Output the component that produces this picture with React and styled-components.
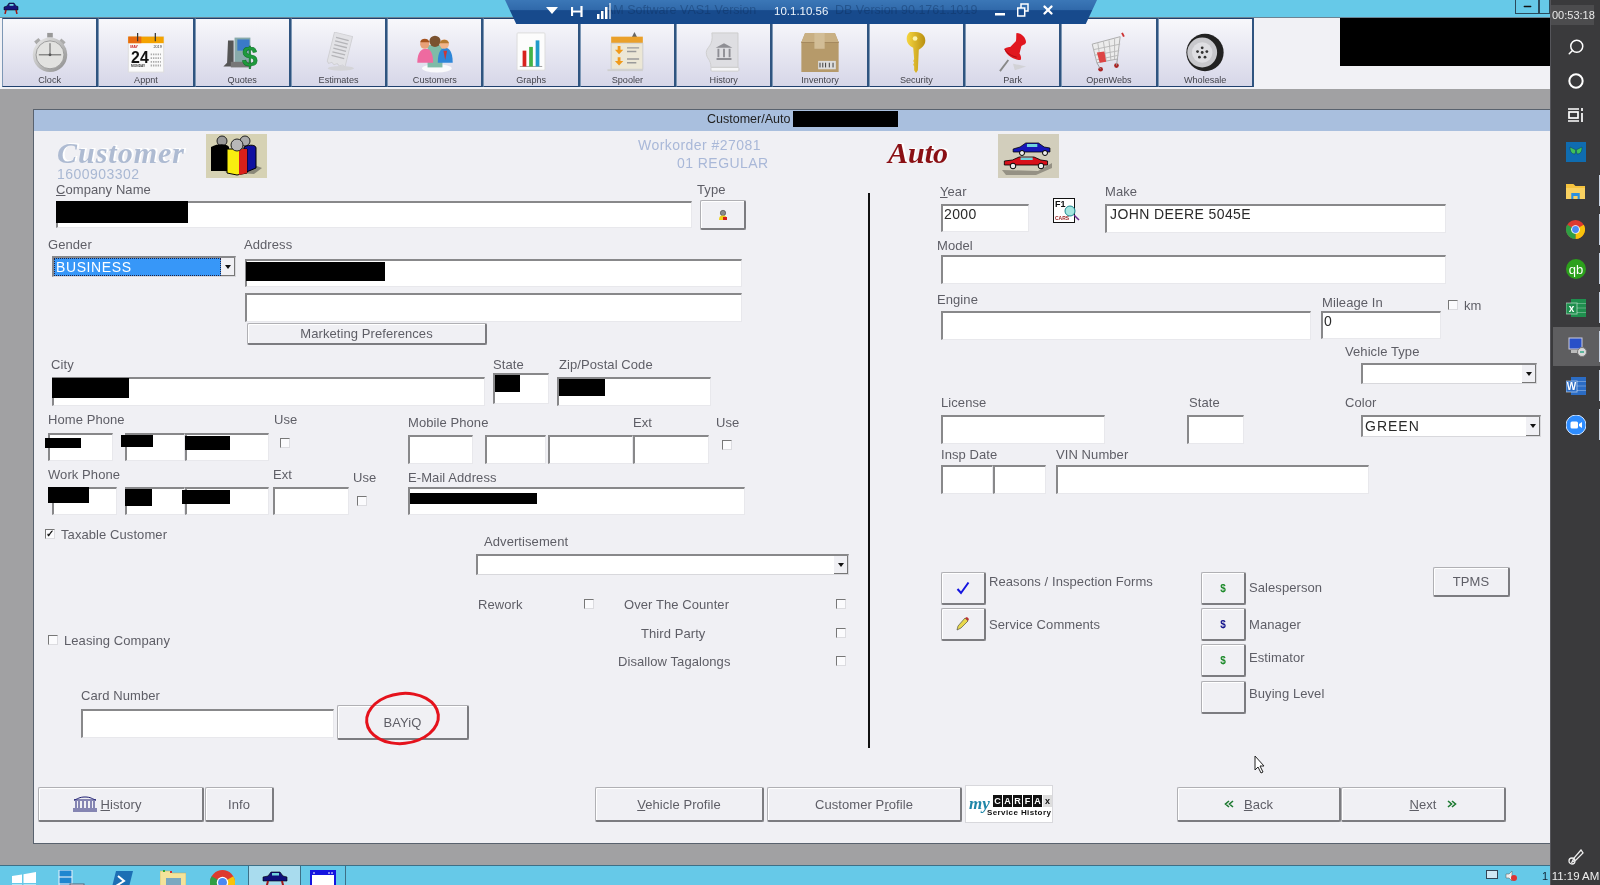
import React from 'react'
import styled, { createGlobalStyle } from 'styled-components'
import { Search, Circle, Minus, X } from 'lucide-react'

const Global = createGlobalStyle`
  html, body { margin: 0; padding: 0; height: 100%; overflow: hidden; }
  body { font-family: "Liberation Sans", Arial, sans-serif; background: #66c9e8; }
  #root { height: 100%; }
`

const Screen = styled.div`
  position: relative;
  display: flex;
  width: 1600px;
  height: 885px;
  overflow: hidden;
  filter: blur(.3px);
`
const Desktop = styled.div`
  display: flex;
  flex-direction: column;
  width: 1550px;
  height: 100%;
`
const TopBar = styled.div`
  height: 17px;
  background: #66c9e8;
  display: flex;
  align-items: flex-start;
  justify-content: space-between;
  padding-left: 3px;
  svg { margin-top: 2px; }
`
const TopButtons = styled.div`
  display: flex;
`
const TopButton = styled.div`
  box-sizing: border-box;
  width: ${p => p.$w}px;
  height: 14px;
  border: 1px solid #2b4a5c;
  border-top: 0;
  display: flex;
  align-items: center;
  justify-content: center;
  svg { margin-top: 0; }
`
const Toolbar = styled.div`
  height: 72px;
  background: #f1f1f5;
  border-top: 1px solid #6c8494;
  box-sizing: border-box;
  padding-left: 2px;
  display: grid;
  grid-template-columns: repeat(13, 96.3px);
  grid-template-rows: 69px;
`
const ToolButton = styled.div`
  box-sizing: border-box;
  display: flex;
  flex-direction: column;
  align-items: center;
  border: 1px solid #20406e;
  border-left: 1px solid #7d97b5;
  border-right: 2px solid #2f5480;
  background: linear-gradient(#f8f8fb, #d6d6e8);
  padding-top: 13px;
  svg { display: block; }
`
const ToolLabel = styled.span`
  font-size: 9.1px;
  line-height: 11px;
  margin-top: 2px;
  color: #44444c;
`
const Redact = styled.div`
  position: absolute;
  left: ${p => p.$x}px;
  top: ${p => p.$y}px;
  width: ${p => p.$w}px;
  height: ${p => p.$h}px;
  background: #000;
`
const Workspace = styled.div`
  flex: 1;
  min-height: 0;
  background: #a1a1a3;
  padding: 20px 0 21px 33px;
  display: flex;
`
const Window = styled.div`
  flex: 1;
  display: flex;
  flex-direction: column;
  background: #f0f0f4;
  border: 1px solid #59626e;
  border-right: 0;
`
const TitleBar = styled.div`
  position: relative;
  height: 21px;
  flex-shrink: 0;
  background: #a9bfde;
  font-size: 12.5px;
  line-height: 18px;
  color: #222;
  padding-left: 673px;
`
const Head = styled.div`
  height: 50px;
  flex-shrink: 0;
  display: flex;
  align-items: flex-start;
  padding-left: 23px;
`
const LogoStack = styled.div`
  width: 149px;
  flex-shrink: 0;
`
const CustomerLogo = styled.div`
  font: italic bold 30px/28px "Liberation Serif", serif;
  letter-spacing: 1px;
  margin-top: 8px;
  color: #aebbd2;
  text-shadow: 2px -1px 0 #fff;
`
const AccountNo = styled.div`
  font-size: 14px;
  line-height: 14px;
  letter-spacing: .45px;
  color: #a9b8d3;
`
const Tile = styled.div`
  flex-shrink: 0;
  width: 61px;
  height: 44px;
  margin-left: ${p => p.$ml || 0}px;
  margin-top: 3px;
  background: ${p => p.$bg};
  svg { display: block; }
`
const OrderInfo = styled.div`
  margin-left: 371px;
  width: 131px;
  flex-shrink: 0;
  font-size: 14px;
  line-height: 18px;
  letter-spacing: .45px;
  color: #a9b8d8;
  padding-top: 5px;
  white-space: nowrap;
`
const OrderLine = styled.div`
  margin-left: ${p => p.$ml || 0}px;
`
const AutoLogo = styled.div`
  width: 60px;
  margin-left: 119px;
  margin-right: 50px;
  flex-shrink: 0;
  margin-top: 8px;
  font: italic bold 30px/28px "Liberation Serif", serif;
  color: #8a1014;
  text-shadow: 2px -1px 0 #fff;
`
const Main = styled.div`
  height: 606px;
  flex-shrink: 0;
  display: flex;
  align-items: flex-start;
`
const LeftPane = styled.div`
  width: 834px;
  flex-shrink: 0;
`
const Divider = styled.div`
  width: 2px;
  height: 555px;
  margin-top: 12px;
  background: #111;
  flex-shrink: 0;
`
const RightPane = styled.div`
  flex: 1;
  padding-left: 70px;
`
const Row = styled.div`
  display: flex;
  align-items: flex-start;
  margin-top: ${p => p.$mt || 0}px;
`
const Field = styled.div`
  display: flex;
  flex-direction: column;
  flex-shrink: 0;
  margin-left: ${p => p.$ml || 0}px;
  margin-top: ${p => p.$mt || 0}px;
  width: ${p => (p.$w ? `${p.$w}px` : 'auto')};
`
const Label = styled.div`
  height: 14px;
  line-height: 16px;
  font-size: 13px;
  letter-spacing: .08px;
  color: #5e5e66;
  white-space: nowrap;
  margin-left: ${p => p.$ml || 0}px;
  margin-top: ${p => p.$mt || 0}px;
  margin-bottom: ${p => p.$gap || 0}px;
  width: ${p => (p.$w ? `${p.$w}px` : 'auto')};
  flex-shrink: 0;
`
const TextBox = styled.div`
  position: relative;
  flex-shrink: 0;
  box-sizing: border-box;
  width: ${p => p.$w}px;
  height: ${p => p.$h}px;
  margin-left: ${p => p.$ml || 0}px;
  margin-top: ${p => p.$mt || 0}px;
  background: #fff;
  border-top: 2px solid #88888a;
  border-left: 2px solid #88888a;
  border-right: 1px solid #e8e8ec;
  border-bottom: 1px solid #e8e8ec;
  padding: 0 0 0 ${p => (p.$spaced ? 3 : 1)}px;
  font-size: 14px;
  line-height: 16px;
  letter-spacing: .4px;
  color: #2a2a2a;
`
const SelectBox = styled.div`
  flex-shrink: 0;
  box-sizing: border-box;
  display: flex;
  width: ${p => p.$w}px;
  height: ${p => p.$h}px;
  margin-left: ${p => p.$ml || 0}px;
  background: #fff;
  border-top: 2px solid #88888a;
  border-left: 2px solid #88888a;
  border-right: 1px solid #d8d8dc;
  border-bottom: 1px solid #d8d8dc;
`
const SelectValue = styled.div`
  flex: 1;
  padding: 1px 0 0 2px;
  font-size: 14px;
  line-height: 16px;
  letter-spacing: ${p => (p.$focus ? '.6px' : '1px')};
  color: ${p => (p.$focus ? '#fff' : '#2a2a2a')};
  background: ${p => (p.$focus ? '#3797f8' : '#fff')};
  outline: ${p => (p.$focus ? '1px dotted #224' : '0')};
  outline-offset: -1px;
`
const SelectArrow = styled.div`
  box-sizing: border-box;
  width: 14px;
  background: #f0f0f4;
  border-right: 1px solid #777;
  border-bottom: 1px solid #777;
  display: flex;
  align-items: center;
  justify-content: center;
  &::after {
    content: '';
    border-left: 3px solid transparent;
    border-right: 3px solid transparent;
    border-top: 4px solid #111;
  }
`
const CheckBox = styled.div`
  box-sizing: border-box;
  flex-shrink: 0;
  width: 10px;
  height: 10px;
  margin-left: ${p => p.$ml || 0}px;
  margin-top: ${p => p.$mt || 0}px;
  background: #fbfbfd;
  border-top: 1px solid #777;
  border-left: 1px solid #777;
  border-right: 1px solid #dcdce0;
  border-bottom: 1px solid #dcdce0;
  display: flex;
  align-items: center;
  justify-content: center;
  font-size: 10px;
  font-weight: bold;
  line-height: 8px;
  color: #111;
`
const CheckLine = styled.div`
  display: flex;
  align-items: center;
  gap: 6px;
  height: 14px;
  flex-shrink: 0;
  margin-left: ${p => p.$ml || 0}px;
  margin-top: ${p => p.$mt || 0}px;
  width: ${p => (p.$w ? `${p.$w}px` : 'auto')};
`
const Flags = styled.div`
  display: flex;
  flex-direction: column;
  gap: 14.5px;
  margin-left: 230px;
  flex-shrink: 0;
`
const FlagRow = styled.div`
  display: flex;
  align-items: center;
  height: 14px;
`
const Btn = styled.div`
  position: relative;
  flex-shrink: 0;
  box-sizing: border-box;
  display: flex;
  align-items: center;
  justify-content: center;
  gap: ${p => p.$gap || 0}px;
  width: ${p => p.$w}px;
  height: ${p => p.$h}px;
  margin-left: ${p => p.$ml || 0}px;
  margin-top: ${p => p.$mt || 0}px;
  padding: 0 ${p => p.$pr || 0}px 0 ${p => p.$pl || 0}px;
  background: #f0f0f4;
  border: 1px solid #b0b0b4;
  border-right: 2px solid #7c7c80;
  border-bottom: 2px solid #7c7c80;
  border-radius: 2px;
  box-shadow: inset 1px 1px 0 #fff;
  font-size: 13px;
  letter-spacing: .08px;
  color: #5e5e66;
  white-space: nowrap;
`
const RedRing = styled.div`
  position: absolute;
  left: 27px;
  top: -14px;
  width: 75px;
  height: 53px;
  box-sizing: border-box;
  border: 3px solid #e5121c;
  border-radius: 50%;
  transform: rotate(-6deg);
`
const ActionCol = styled.div`
  display: flex;
  flex-direction: column;
  gap: 3px;
  margin-top: 5px;
  margin-left: ${p => p.$ml || 0}px;
  width: ${p => p.$w}px;
  flex-shrink: 0;
`
const ActionRow = styled.div`
  display: flex;
  align-items: flex-start;
  margin-top: ${p => p.$mt || 0}px;
`
const ActionLabel = styled(Label)`
  margin-left: 3px;
  margin-top: ${p => p.$dy}px;
`
const Footer = styled.div`
  display: flex;
  align-items: flex-start;
  height: 35px;
`
const CarfaxBox = styled.div`
  box-sizing: border-box;
  width: 88px;
  height: 38px;
  margin-left: 3px;
  margin-top: -2px;
  flex-shrink: 0;
  background: #fff;
  border: 1px solid #d8d8dc;
  display: flex;
  align-items: flex-start;
  padding: 9px 0 0 3px;
`
const CarfaxMy = styled.span`
  width: 21px;
  flex-shrink: 0;
  font: italic bold 17px/18px "Liberation Serif", serif;
  color: #1f86a8;
`
const CarfaxStack = styled.div`
  margin-left: 3px;
`
const CarfaxLetters = styled.div`
  display: flex;
  gap: 1px;
`
const CarfaxLetter = styled.span`
  width: 9px;
  height: 12px;
  background: ${p => (p.$light ? '#ddd' : '#111')};
  color: ${p => (p.$light ? '#111' : '#fff')};
  font-size: 9px;
  line-height: 12px;
  font-weight: bold;
  text-align: center;
`
const CarfaxService = styled.div`
  font-size: 8px;
  line-height: 11px;
  font-weight: bold;
  color: #111;
  white-space: nowrap;
  letter-spacing: .4px;
  margin-left: -6px;
`
const Taskbar = styled.div`
  height: 20px;
  box-sizing: border-box;
  background: #66c9e8;
  border-top: 1px solid #3e6f86;
  display: flex;
  overflow: hidden;
  flex-shrink: 0;
`
const TaskSlot = styled.div`
  box-sizing: border-box;
  width: ${p => p.$w}px;
  flex-shrink: 0;
  display: flex;
  justify-content: center;
  padding-top: ${p => p.$pt || 4}px;
  background: ${p => (p.$active ? '#a9dcee' : 'transparent')};
  border-right: ${p => (p.$line ? '1px solid #3e6f86' : '0')};
  svg { flex-shrink: 0; }
`
const Tray = styled.div`
  margin-left: auto;
  display: flex;
  align-items: flex-start;
  gap: 7px;
  padding: 4px 2px 0 0;
  font-size: 11px;
  color: #123;
`
const TrayCount = styled.span`
  margin-left: 18px;
`
const Sidebar = styled.div`
  width: 50px;
  height: 100%;
  background: #3a3a3c;
  border-left: 1px solid #55555a;
  box-sizing: border-box;
  display: flex;
  flex-direction: column;
  align-items: stretch;
  color: #fff;
`
const Timer = styled.div`
  height: 20px;
  margin: 5px 6px 5px 0;
  background: #4c4c4e;
  font-size: 11px;
  line-height: 20px;
  color: #e8e8e8;
  white-space: nowrap;
  padding-left: 1px;
`
const SideSlot = styled.div`
  position: relative;
  height: ${p => p.$h}px;
  flex-shrink: 0;
  display: flex;
  align-items: center;
  justify-content: center;
  background: ${p => (p.$active ? '#5e5e60' : 'transparent')};
  margin-left: ${p => (p.$active ? 2 : 0)}px;
  ${p => p.$running && `
    &::after {
      content: '';
      position: absolute;
      right: 0;
      top: 4px;
      bottom: 4px;
      width: 1px;
      background: #c9d4e4;
    }
  `}
`
const SideSearch = styled(Search)`
  transform: scaleX(-1);
`
const SideBottom = styled.div`
  margin-top: auto;
  display: flex;
  flex-direction: column;
  align-items: center;
  gap: 4px;
  padding-bottom: 1px;
  font-size: 11.5px;
  line-height: 15px;
  white-space: nowrap;
  color: #eee;
`
const ConnBar = styled.div`
  position: absolute;
  left: 505px;
  top: 0;
  width: 592px;
  height: 24px;
  clip-path: polygon(0 0, 100% 0, 98.1% 100%, 1.9% 100%);
  background: linear-gradient(#3b77b7 0, #3069aa 42%, #174a8c 44%, #174a8c 100%);
  color: #fff;
`
const ConnGhost = styled.div`
  position: absolute;
  left: ${p => p.$x}px;
  top: 2px;
  font-size: 12.5px;
  line-height: 16px;
  white-space: nowrap;
  color: rgba(12, 44, 90, .4);
`
const ConnIp = styled.div`
  position: absolute;
  left: 269px;
  top: 3px;
  font-size: 11.5px;
  line-height: 16px;
  color: #eef4fb;
`
const ConnIcons = styled.div`
  position: absolute;
  left: ${p => p.$x}px;
  top: 3px;
  display: flex;
  align-items: center;
  gap: ${p => p.$gap}px;
`
const Cursor = styled.svg`
  position: absolute;
  left: 1254px;
  top: 755px;
`
const F1Wrap = styled.div`
  flex-shrink: 0;
  width: 27px;
  height: 26px;
  margin: 14px 0 0 24px;
`
const ChevronSvg = styled.svg`
  transform: ${p => (p.$flip ? 'scaleX(-1)' : 'none')};
`

/* toolbar drawings */
const ClockIcon = () => (
  <svg width="44" height="44" viewBox="0 0 44 44">
    <defs><linearGradient id="cg" x1="0" y1="0" x2="1" y2="1"><stop offset="0" stopColor="#eee" /><stop offset="1" stopColor="#8a8a8a" /></linearGradient></defs>
    <rect x="19" y="1" width="6" height="5" fill="#999" />
    <rect x="6" y="7" width="6" height="4" fill="#aaa" transform="rotate(-40 10 10)" />
    <rect x="32" y="7" width="6" height="4" fill="#aaa" transform="rotate(40 33 10)" />
    <circle cx="22" cy="24.500" r="18.500" fill="url(#cg)" />
    <circle cx="22" cy="24.500" r="15" fill="#e2e2e0" stroke="#9a9a9a" />
    <path d="M22 12v12M10 24.500h24" stroke="#555" strokeWidth="1" />
    <circle cx="22" cy="24.500" r="1.500" fill="#555" />
  </svg>
)
const CalendarIcon = () => (
  <svg width="44" height="44" viewBox="0 0 44 44">
    <rect x="3" y="5" width="38" height="38" fill="#fafafa" stroke="#ddd" />
    <rect x="3" y="5" width="38" height="7" fill="#f4a300" />
    <rect x="3" y="5" width="14" height="7" fill="#e86a10" />
    <path d="M13 1v9M32 1v9" stroke="#333" strokeWidth="1.3" />
    <text x="5" y="17" fontSize="4" fontWeight="bold" fill="#c22">MAY</text>
    <text x="30" y="17" fontSize="4" fill="#333">2019</text>
    <text x="6" y="33" fontSize="17" fontWeight="bold" fontFamily="Liberation Sans" fill="#111">24</text>
    <text x="6" y="38" fontSize="3.5" fontWeight="bold" fill="#333">MONDAY</text>
    <path d="M27 24h11M27 28h11M27 32h11M27 36h11" stroke="#aaa" strokeWidth="2" strokeDasharray="1.5 1" />
  </svg>
)
const QuotesIcon = () => (
  <svg width="44" height="44" viewBox="0 0 44 44">
    <path d="M7 9h6v28H2l4-4z" fill="#555" />
    <rect x="14" y="6" width="17" height="29" fill="#8aa" />
    <rect x="17" y="8" width="13" height="12" fill="#3a7ac8" />
    <rect x="10" y="32" width="22" height="6" fill="#777" />
    <text x="22" y="37" fontSize="30" fontWeight="bold" fontFamily="Liberation Sans" fill="#1e9a3c" stroke="#0c6a24" strokeWidth=".5">$</text>
  </svg>
)
const EstimatesIcon = () => (
  <svg width="44" height="44" viewBox="0 0 44 44">
    <g transform="rotate(14 22 22)">
      <path d="M12 2h20v34l-3-2-3 2-3-2-3 2-3-2-3 2-2-2z" fill="#e2e2e6" stroke="#d0d0d4" />
      <path d="M15 7h14M15 11h14M15 15h14M15 19h14M15 23h14M15 27h14" stroke="#b4b4b8" strokeWidth="1.4" />
    </g>
    <ellipse cx="24" cy="39" rx="14" ry="2.5" fill="#d4d4d8" />
  </svg>
)
const CustomersIcon = () => (
  <svg width="44" height="44" viewBox="0 0 44 44">
    <ellipse cx="24" cy="39" rx="16" ry="4.5" fill="#fafafc" />
    <path d="M14 14h16v24H14z" fill="#7fbba8" />
    <circle cx="22" cy="10" r="6" fill="#7a5230" />
    <path d="M3 33c0-12 5-15 9-15s8 3 8 15z" fill="#ee6aa0" />
    <circle cx="11" cy="13" r="5" fill="#e8a078" />
    <path d="M6 11c1-5 9-5 10 0z" fill="#a5521e" />
    <path d="M25 33c0-12 4-16 8-16s8 4 8 16z" fill="#2e86d8" />
    <path d="M31 20h4l-2 10z" fill="#ca3838" />
    <circle cx="32" cy="13" r="5" fill="#f2b58a" />
    <path d="M27 12c1-5 9-5 10 0z" fill="#b57a30" />
  </svg>
)
const GraphsIcon = () => (
  <svg width="44" height="44" viewBox="0 0 44 44">
    <rect x="7" y="1" width="30" height="40" rx="1" fill="#fcfcfc" stroke="#dcdcdc" />
    <path d="M10 37h24" stroke="#999" />
    <rect x="13" y="20" width="4" height="17" fill="#d8201c" />
    <rect x="20" y="16" width="4" height="21" fill="#43b347" />
    <rect x="27" y="9" width="4" height="28" fill="#1f9ac9" />
  </svg>
)
const SpoolerIcon = () => (
  <svg width="44" height="44" viewBox="0 0 44 44">
    <path d="M30 0l3 6h-6z" fill="#666" />
    <rect x="5" y="5" width="34" height="7" fill="#eaa02a" />
    <rect x="5" y="12" width="34" height="28" fill="#ece7d6" stroke="#ccc" />
    <path d="M12 15h3v4h3l-4.500 5-4.500-5h3zM12 27h3v4h3l-4.500 5-4.500-5h3z" fill="#f09a1c" />
    <path d="M22 17h13M22 21h10M22 29h13M22 33h10" stroke="#9a9a9a" strokeWidth="1.5" />
    <rect x="1" y="40" width="38" height="2" fill="#cfcfcf" />
  </svg>
)
const HistoryIcon = () => (
  <svg width="44" height="44" viewBox="0 0 44 44">
    <path d="M9 1h28v37H8c0-9-5-9-5-16 0-6 8-7 6-21z" fill="#dedee2" stroke="#ccc" />
    <rect x="8" y="38" width="30" height="4" rx="1" fill="#f6f6f8" stroke="#ccc" />
    <path d="M22 12l9 5H13zM14 28h16v2H14zM15 18h2v9h-2zM21 18h2v9h-2zM27 18h2v9h-2z" fill="#8e8e94" />
  </svg>
)
const InventoryIcon = () => (
  <svg width="44" height="44" viewBox="0 0 44 44">
    <path d="M6 1h32l4 10v32H2V11z" fill="#b69a6a" />
    <path d="M2 11h40" stroke="#8d7148" />
    <path d="M6 1h32l4 10H2z" fill="#c9b084" />
    <rect x="16" y="1" width="11" height="17" fill="#d2bd96" />
    <rect x="20" y="31" width="19" height="9" fill="#ddd" />
    <path d="M22 33v5M25 33v5M28 33v5M32 33v5M36 33v5" stroke="#333" />
  </svg>
)
const KeyIcon = () => (
  <svg width="44" height="44" viewBox="0 0 44 44">
    <defs><linearGradient id="kg" x1="0" y1="0" x2="1" y2="0"><stop offset="0" stopColor="#f6d640" /><stop offset="1" stopColor="#b98f10" /></linearGradient></defs>
    <path d="M22 0c6 0 10 4 10 9 0 5-4 8-7 10l-1 22-2 3-2-3v-4l-1-2 1-2-1-2 1-2-1-12c-4-2-7-5-7-10 0-5 4-9 10-9z" fill="url(#kg)" />
    <circle cx="21" cy="7" r="2.5" fill="#fbf3b0" />
  </svg>
)
const ParkIcon = () => (
  <svg width="44" height="44" viewBox="0 0 44 44">
    <path d="M17 30L8 42" stroke="#888" strokeWidth="2" />
    <path d="M26 1c5 0 10 5 10 10-1 3-4 3-5 4l-2 8c2 3 2 6 1 7-3 1-15-4-17-11 0-2 3-3 6-3l6-6c1-2 0-9 1-9z" fill="#e1161f" />
    <path d="M13 18c2 5 8 8 13 9" stroke="#a60c12" fill="none" />
    <path d="M22 34l14 3-12 4z" fill="#ccc" opacity=".7" />
  </svg>
)
const CartIcon = () => (
  <svg width="44" height="44" viewBox="0 0 44 44">
    <path d="M36 1l2 4" stroke="#c33" strokeWidth="2" />
    <path d="M4 13l30-8-3 24-22 4z" fill="#ececec" stroke="#aaa" />
    <path d="M10 12l3 20M16 10l3 21M22 9l2 21M28 7l0 22M5 19l29-6M6 25l27-5M8 30l24-5" stroke="#b8b8b8" fill="none" />
    <path d="M9 22l8-1 2 11-7 1z" fill="#d44" />
    <circle cx="13" cy="40" r="2.500" fill="#a22" />
    <circle cx="30" cy="36" r="2.500" fill="#a22" />
    <path d="M9 33l4 7M31 29l-1 7" stroke="#999" />
  </svg>
)
const TireIcon = () => (
  <svg width="44" height="44" viewBox="0 0 44 44">
    <circle cx="22" cy="22" r="20" fill="#222" />
    <circle cx="19" cy="22" r="16" fill="#c8c8cc" />
    <circle cx="19" cy="22" r="11" fill="#dedee2" />
    <g fill="#333">
      <circle cx="19" cy="17" r="1.500" /><circle cx="24" cy="21" r="1.500" /><circle cx="22" cy="27" r="1.500" />
      <circle cx="16" cy="27" r="1.500" /><circle cx="14" cy="21" r="1.500" /><circle cx="19" cy="22" r="1.500" />
    </g>
  </svg>
)

const tools = [
  ['Clock', ClockIcon], ['Appnt', CalendarIcon], ['Quotes', QuotesIcon], ['Estimates', EstimatesIcon],
  ['Customers', CustomersIcon], ['Graphs', GraphsIcon], ['Spooler', SpoolerIcon], ['History', HistoryIcon],
  ['Inventory', InventoryIcon], ['Security', KeyIcon], ['Park', ParkIcon], ['OpenWebs', CartIcon], ['Wholesale', TireIcon],
]

/* small drawings */
const AppCar = () => (
  <svg width="16" height="12" viewBox="0 0 16 12">
    <path d="M1 5l3-1 2-3h5l2 3 2 .5V8H1z" fill="#16167a" stroke="#000" strokeWidth=".5" />
    <rect x="6.500" y="2" width="4" height="1.800" fill="#6fd3dc" />
    <path d="M3 8l-1 4M13 8l1 4" stroke="#a01818" strokeWidth="1.500" />
  </svg>
)
const LiftCar = () => (
  <svg width="26" height="18" viewBox="0 0 26 18">
    <path d="M1 6l5-1 3-4h9l3 4 4 1v4H1z" fill="#10107c" stroke="#000" strokeWidth=".6" />
    <rect x="10" y="2" width="7" height="2.500" fill="#6fd3dc" />
    <path d="M6 10l-2 8M20 10l2 8" stroke="#a01818" strokeWidth="2" />
  </svg>
)
const PeopleTile = () => (
  <svg width="61" height="44" viewBox="0 0 61 44">
    <path d="M18 38l30 2 8-6-10-4z" fill="#8a8878" />
    <circle cx="16" cy="7" r="5" fill="#999" stroke="#222" />
    <circle cx="39" cy="7" r="5" fill="#aaa" stroke="#222" />
    <path d="M5 13c8-4 16-3 18 0v24H5z" fill="#000" />
    <path d="M38 13c6-3 12-2 12 1v20l-12 5z" fill="#1010a0" stroke="#000" />
    <path d="M21 15h20v24l-10 2-10-2z" fill="#f8ee10" stroke="#000" />
    <path d="M33 15h8v24l-8 2z" fill="#d8201a" />
    <circle cx="31" cy="11" r="6" fill="#b8b8b8" stroke="#222" />
  </svg>
)
const CarsTile = () => (
  <svg width="61" height="44" viewBox="0 0 61 44">
    <path d="M4 36l36 1 14-8v5l-16 7H8z" fill="#7a786c" opacity=".7" />
    <g transform="translate(14 7) scale(1.15 1)"><path d="M1 8l6-2 5-4h11l5 4 5 1v4H1z" fill="#1616b8" stroke="#000" strokeWidth=".7" /><rect x="13" y="3" width="9" height="3" fill="#6fd3dc" /></g>
    <circle cx="24" cy="19" r="2.500" fill="#eee" stroke="#000" />
    <circle cx="47" cy="19" r="2.500" fill="#eee" stroke="#000" />
    <g transform="translate(5 21) scale(1.35 1)"><path d="M1 6l6-1 5-3h11l5 3 5 1v4H1z" fill="#d8101a" stroke="#000" strokeWidth=".7" /><rect x="13" y="2.500" width="9" height="2.500" fill="#6fd3dc" /></g>
    <circle cx="15" cy="32" r="2.800" fill="#eee" stroke="#000" />
    <circle cx="43" cy="32" r="2.800" fill="#eee" stroke="#000" />
  </svg>
)
const PersonMini = () => (
  <svg width="12" height="12" viewBox="0 0 12 12">
    <circle cx="6" cy="4" r="2.700" fill="#8a8a8a" stroke="#333" strokeWidth=".5" />
    <path d="M2 11c0-4 2-4.500 4-4.500s4 .5 4 4.500z" fill="#f2d21c" />
    <path d="M6 8h4v3H6z" fill="#d8201a" />
  </svg>
)
const F1Card = () => (
  <F1Wrap>
    <svg width="27" height="26" viewBox="0 0 27 26">
      <rect x=".5" y=".5" width="21" height="24" fill="#fff" stroke="#111" />
      <text x="2" y="9" fontSize="9" fontWeight="bold" fontFamily="Liberation Sans" fill="#111">F1</text>
      <text x="2" y="22" fontSize="5" fontWeight="bold" fill="#922">CARS</text>
      <circle cx="17" cy="13" r="5" fill="#a5e6e0" stroke="#1b8a90" />
      <path d="M21 17l5 5" stroke="#6a2a90" strokeWidth="1.500" />
    </svg>
  </F1Wrap>
)
const BankGlyph = () => (
  <svg width="24" height="16" viewBox="0 0 24 16" fill="none" stroke="#1a1a70">
    <path d="M1 4c4-1 5-3 11-3s7 2 11 3z" />
    <path d="M3 5v7M6 5v7M10 5v7M14 5v7M18 5v7M21 5v7" />
    <path d="M0 13h24M0 15h24" strokeWidth="1.200" />
  </svg>
)
const Chevrons = ({ flip }) => (
  <ChevronSvg $flip={flip} width="10" height="8" viewBox="0 0 10 8" fill="none" stroke="#1d7a30" strokeWidth="1.600">
    <path d="M5 1L1.500 4 5 7M9 1L5.500 4 9 7" />
  </ChevronSvg>
)
const Dollar = styled.span`
  font-size: 10px;
  font-weight: bold;
  color: ${p => p.$c};
`
const BlueCheck = () => (
  <svg width="14" height="14" viewBox="0 0 14 14" fill="none" stroke="#1414e0" strokeWidth="2">
    <path d="M1.500 8l3.500 4L12.500 1.500" />
  </svg>
)
const Pencil = () => (
  <svg width="14" height="14" viewBox="0 0 14 14">
    <path d="M1 13l1-4 7-8 3 3-7 7z" fill="#e8d84c" stroke="#554" strokeWidth=".7" />
    <path d="M9 1l3 3 1-2-2-2z" fill="#b33" />
  </svg>
)
const ChromeMark = ({ size = 25 }) => (
  <svg width={size} height={size} viewBox="0 0 24 24">
    <circle cx="12" cy="12" r="12" fill="#dd3a2e" />
    <path d="M12 12L22.400 6A12 12 0 0 1 12 24z" fill="#f8c30c" />
    <path d="M12 12L12 24A12 12 0 0 1 1.600 6z" fill="#2f9e44" />
    <circle cx="12" cy="12" r="5.500" fill="#fff" />
    <circle cx="12" cy="12" r="4.300" fill="#4a8af4" />
  </svg>
)
const TaskViewGlyph = () => (
  <svg width="16" height="14" viewBox="0 0 16 14" fill="none" stroke="#fff" strokeWidth="1.700">
    <path d="M0 1h11M0 13h11" />
    <rect x="1" y="4" width="9" height="6" />
    <path d="M14 0v3M14 5v9" />
  </svg>
)
const ButterflyTile = () => (
  <svg width="20" height="20" viewBox="0 0 20 20">
    <rect width="20" height="20" fill="#0f6cb0" />
    <path d="M10 8L4 5c0 4 1 7 5 7zM10 8l6-3c0 4-1 7-5 7z" fill="#3fc25a" stroke="#0c3a5a" strokeWidth=".5" />
  </svg>
)
const FolderGlyph = () => (
  <svg width="19" height="16" viewBox="0 0 18 16" preserveAspectRatio="none">
    <path d="M0 1h7l2 2h9v13H0z" fill="#f6c33e" />
    <rect x="0" y="5" width="18" height="11" fill="#f9d161" />
    <rect x="5" y="10" width="8" height="6" fill="#2a90e0" />
    <rect x="7" y="13" width="4" height="3" fill="#f9d161" />
  </svg>
)
const QbGlyph = () => (
  <svg width="20" height="20" viewBox="0 0 20 20">
    <circle cx="10" cy="10" r="10" fill="#2ca01c" />
    <text x="10" y="14.500" textAnchor="middle" fontSize="13" fontFamily="Liberation Sans" fill="#fff">qb</text>
  </svg>
)
const OfficeGlyph = ({ tone, letter }) => (
  <svg width="20" height="18" viewBox="0 0 20 18">
    <rect x="5" y="0" width="15" height="18" fill={tone} />
    <path d="M5 4.500h15M5 9h15M5 13.500h15" stroke="#fff" strokeOpacity=".3" />
    <rect x="0" y="4" width="11" height="11" fill={tone} stroke="#fff" strokeOpacity=".5" />
    <text x="5.500" y="13" textAnchor="middle" fontSize="10" fontWeight="bold" fontFamily="Liberation Sans" fill="#fff">{letter}</text>
  </svg>
)
const RemoteGlyph = () => (
  <svg width="20" height="20" viewBox="0 0 20 20">
    <rect x="2" y="1" width="13" height="11" fill="#2850c8" stroke="#ccd" />
    <rect x="4" y="13" width="9" height="3" fill="#bbb" />
    <circle cx="15" cy="15" r="4.500" fill="#d8d8d8" stroke="#777" />
    <path d="M13 15h4" stroke="#3a8" strokeWidth="1.500" />
  </svg>
)
const ZoomGlyph = () => (
  <svg width="20" height="20" viewBox="0 0 20 20">
    <circle cx="10" cy="10" r="10" fill="#2d8cff" stroke="#cfe4ff" strokeWidth="1" />
    <rect x="4.500" y="6.500" width="7.500" height="7" rx="1.500" fill="#fff" />
    <path d="M13 9l3-2v6l-3-2z" fill="#fff" />
  </svg>
)
const PenGlyph = () => (
  <svg width="16" height="16" viewBox="0 0 16 16" fill="none" stroke="#eee" strokeWidth="1.300">
    <path d="M13 1L6 9l-2 4 4-2 7-7z" />
    <circle cx="4" cy="12" r="3" />
  </svg>
)
const WinLogo = () => (
  <svg width="24" height="24" viewBox="0 0 24 24" fill="#fff">
    <path d="M0 4l10-1.500V11H0zM11.500 2.300L24 0v11H11.500zM0 12.500h10v9L0 20zM11.500 12.500H24V24l-12.500-2z" />
  </svg>
)
const ServerGlyph = () => (
  <svg width="28" height="26" viewBox="0 0 28 26">
    <rect x="1" y="0" width="13" height="22" fill="#1f86d0" stroke="#e8f4fb" />
    <path d="M1 7h13M1 14h13" stroke="#fff" />
    <rect x="12" y="14" width="14" height="10" fill="#dde" stroke="#567" />
  </svg>
)
const ShellGlyph = () => (
  <svg width="22" height="24" viewBox="0 0 22 24">
    <path d="M5 1h17l-5 20H0z" fill="#1c6fb4" />
    <path d="M7 6l6 5-8 5" stroke="#fff" strokeWidth="2" fill="none" />
  </svg>
)
const FilesGlyph = () => (
  <svg width="26" height="24" viewBox="0 0 26 24">
    <path d="M0 1h10l2 2h14v20H0z" fill="#f4e39a" stroke="#b8a860" strokeWidth=".5" />
    <rect x="3" y="0" width="2" height="2" fill="#3a3" />
    <rect x="10" y="1" width="2" height="2" fill="#c33" />
    <rect x="6" y="8" width="15" height="12" fill="#7ba8c0" />
  </svg>
)
const AppWindow = () => (
  <svg width="26" height="24" viewBox="0 0 26 24">
    <rect x="1" y="1" width="24" height="23" fill="#fff" stroke="#1414e0" strokeWidth="2" />
    <rect x="1" y="1" width="24" height="4" fill="#1414e0" />
    <path d="M3 3h2M18 3h2M21 3h2" stroke="#fff" />
  </svg>
)

function ToolBar() {
  return (
    <Toolbar>
      {tools.map(([label, Icon]) => (
        <ToolButton key={label}>
          <Icon />
          <ToolLabel>{label}</ToolLabel>
        </ToolButton>
      ))}
    </Toolbar>
  )
}

function CustomerForm() {
  return (
    <LeftPane>
      <Row $mt={1}>
        <Field $ml={22} $w={636}>
          <Label $gap={5}><u>C</u>ompany Name</Label>
          <TextBox $w={636} $h={27}><Redact $x={-2} $y={-2} $w={132} $h={22} /></TextBox>
        </Field>
        <Field $ml={5}>
          <Label $gap={4}>Type</Label>
          <Btn $w={46} $h={30} $ml={3}><PersonMini /></Btn>
        </Field>
      </Row>
      <Row $mt={7}>
        <Field $ml={14} $w={188}>
          <Label $gap={5}>Gender</Label>
          <SelectBox $w={184} $h={21} $ml={4}>
            <SelectValue $focus>BUSINESS</SelectValue>
            <SelectArrow />
          </SelectBox>
        </Field>
        <Field $ml={8}>
          <Label $gap={8}>Address</Label>
          <TextBox $w={497} $h={28} $ml={1}><Redact $x={-1} $y={1} $w={139} $h={19} /></TextBox>
          <TextBox $w={497} $h={29} $ml={1} $mt={6} />
          <Btn $w={240} $h={22} $ml={3} $mt={1}>Marketing Preferences</Btn>
        </Field>
      </Row>
      <Row $mt={12}>
        <Field $ml={17}>
          <Label $gap={6}>City</Label>
          <TextBox $w={433} $h={29} $ml={1}><Redact $x={-2} $y={-1} $w={77} $h={20} /></TextBox>
        </Field>
        <Field $ml={8}>
          <Label $gap={2}>State</Label>
          <TextBox $w={56} $h={31}><Redact $x={0} $y={0} $w={25} $h={17} /></TextBox>
        </Field>
        <Field $ml={8}>
          <Label $gap={6} $ml={2}>Zip/Postal Code</Label>
          <TextBox $w={154} $h={29}><Redact $x={0} $y={0} $w={46} $h={17} /></TextBox>
        </Field>
      </Row>
      <Row $mt={6}>
        <Field $ml={14}>
          <Label $gap={7}>Home Phone</Label>
          <Row>
            <TextBox $w={65} $h={28}><Redact $x={-5} $y={3} $w={36} $h={10} /></TextBox>
            <TextBox $w={60} $h={28} $ml={12}><Redact $x={-6} $y={0} $w={32} $h={12} /></TextBox>
            <TextBox $w={84} $h={28}><Redact $x={-2} $y={1} $w={45} $h={14} /></TextBox>
          </Row>
        </Field>
        <Field $ml={5} $w={24}>
          <Label $gap={12}>Use</Label>
          <CheckBox $ml={6} />
        </Field>
        <Field $ml={110} $mt={3} $w={65}>
          <Label $gap={6}>Mobile Phone</Label>
          <TextBox $w={65} $h={29} />
        </Field>
        <Field $ml={12} $mt={3}>
          <Label $gap={6} />
          <TextBox $w={61} $h={29} />
        </Field>
        <Field $ml={2} $mt={3}>
          <Label $gap={6} />
          <TextBox $w={85} $h={29} />
        </Field>
        <Field $mt={3}>
          <Label $gap={6}>Ext</Label>
          <TextBox $w={76} $h={29} />
        </Field>
        <Field $ml={7}>
          <Label $gap={11} $mt={3}>Use</Label>
          <CheckBox $ml={6} />
        </Field>
      </Row>
      <Row $mt={3}>
        <Field $ml={14}>
          <Label $gap={6}>Work Phone</Label>
          <Row>
            <TextBox $w={65} $h={28} $ml={4}><Redact $x={-6} $y={-2} $w={41} $h={16} /></TextBox>
            <TextBox $w={60} $h={28} $ml={8}><Redact $x={-2} $y={0} $w={27} $h={17} /></TextBox>
            <TextBox $w={84} $h={28}><Redact $x={-5} $y={1} $w={48} $h={14} /></TextBox>
          </Row>
        </Field>
        <Field $ml={4}>
          <Label $gap={6}>Ext</Label>
          <TextBox $w={76} $h={28} />
        </Field>
        <Field $ml={4} $mt={3} $w={24}>
          <Label $gap={12}>Use</Label>
          <CheckBox $ml={4} />
        </Field>
        <Field $ml={31} $mt={3}>
          <Label $gap={3}>E-Mail Address</Label>
          <TextBox $w={337} $h={28}><Redact $x={0} $y={4} $w={127} $h={11} /></TextBox>
        </Field>
      </Row>
      <Row $mt={12}>
        <CheckLine $ml={11} $w={200}>
          <CheckBox>✓</CheckBox>
          <Label>Taxable Customer</Label>
        </CheckLine>
        <Field $ml={231} $mt={7}>
          <Label $gap={6} $ml={8}>Advertisement</Label>
          <SelectBox $w={373} $h={21}>
            <SelectValue />
            <SelectArrow />
          </SelectBox>
        </Field>
      </Row>
      <Row $mt={22}>
        <CheckLine $ml={14} $mt={36} $w={200}>
          <CheckBox />
          <Label>Leasing Company</Label>
        </CheckLine>
        <Flags>
          <FlagRow>
            <Label $w={106}>Rework</Label>
            <CheckBox />
            <Label $ml={30} $w={212}>Over The Counter</Label>
            <CheckBox />
          </FlagRow>
          <FlagRow>
            <Label $ml={163} $w={195}>Third Party</Label>
            <CheckBox />
          </FlagRow>
          <FlagRow>
            <Label $ml={140} $w={218}>Disallow Tagalongs</Label>
            <CheckBox />
          </FlagRow>
        </Flags>
      </Row>
      <Row $mt={20}>
        <Field $ml={47}>
          <Label $gap={7}>Card Number</Label>
          <TextBox $w={253} $h={29} />
        </Field>
        <Btn $w={132} $h={35} $ml={3} $mt={17}>
          BAYiQ
          <RedRing />
        </Btn>
      </Row>
    </LeftPane>
  )
}

function AutoForm() {
  return (
    <RightPane>
      <Row $mt={3}>
        <Field $w={89}>
          <Label $gap={6}><u>Y</u>ear</Label>
          <TextBox $w={88} $h={28} $ml={1}>2000</TextBox>
        </Field>
        <F1Card />
        <Field $ml={25}>
          <Label $gap={6}>Make</Label>
          <TextBox $w={341} $h={29} $spaced>JOHN DEERE 5045E</TextBox>
        </Field>
      </Row>
      <Row $mt={5}>
        <Field $ml={-3}>
          <Label $gap={3}>Model</Label>
          <TextBox $w={505} $h={29} $ml={4} />
        </Field>
      </Row>
      <Row $mt={8}>
        <Field $ml={-3}>
          <Label $gap={5}>Engine</Label>
          <TextBox $w={370} $h={29} $ml={4} />
        </Field>
        <Field $ml={10} $mt={3}>
          <Label $gap={2} $ml={1}>Mileage In</Label>
          <TextBox $w={120} $h={28}>0</TextBox>
        </Field>
        <CheckLine $ml={7} $mt={6}>
          <CheckBox />
          <Label>km</Label>
        </CheckLine>
      </Row>
      <Row $mt={4}>
        <Field $ml={405}>
          <Label $gap={5}>Vehicle Type</Label>
          <SelectBox $w={176} $h={21} $ml={16}>
            <SelectValue />
            <SelectArrow />
          </SelectBox>
        </Field>
      </Row>
      <Row $mt={11}>
        <Field $ml={1}>
          <Label $gap={6}>License</Label>
          <TextBox $w={164} $h={29} />
        </Field>
        <Field $ml={82}>
          <Label $gap={6} $ml={2}>State</Label>
          <TextBox $w={57} $h={29} />
        </Field>
        <Field $ml={101}>
          <Label $gap={6}>Color</Label>
          <SelectBox $w={180} $h={22} $ml={16}>
            <SelectValue>GREEN</SelectValue>
            <SelectArrow />
          </SelectBox>
        </Field>
      </Row>
      <Row $mt={3}>
        <Field $ml={1}>
          <Label $gap={4}>Insp Date</Label>
          <Row>
            <TextBox $w={52} $h={29} />
            <TextBox $w={53} $h={29} />
          </Row>
        </Field>
        <Field $ml={10}>
          <Label $gap={4}>VIN Number</Label>
          <TextBox $w={313} $h={29} />
        </Field>
      </Row>
      <Row $mt={73}>
        <ActionCol $ml={1} $w={260}>
          <ActionRow>
            <Btn $w={45} $h={33}><BlueCheck /></Btn>
            <ActionLabel $dy={2}>Reasons / Inspection Forms</ActionLabel>
          </ActionRow>
          <ActionRow>
            <Btn $w={45} $h={33}><Pencil /></Btn>
            <ActionLabel $dy={9}>Service Comments</ActionLabel>
          </ActionRow>
        </ActionCol>
        <ActionCol $w={232}>
          <ActionRow>
            <Btn $w={45} $h={33}><Dollar $c="#1d8a2a">$</Dollar></Btn>
            <ActionLabel $dy={8}>Salesperson</ActionLabel>
          </ActionRow>
          <ActionRow>
            <Btn $w={45} $h={33}><Dollar $c="#14148c">$</Dollar></Btn>
            <ActionLabel $dy={9}>Manager</ActionLabel>
          </ActionRow>
          <ActionRow>
            <Btn $w={45} $h={33}><Dollar $c="#1d8a2a">$</Dollar></Btn>
            <ActionLabel $dy={6}>Estimator</ActionLabel>
          </ActionRow>
          <ActionRow $mt={1}>
            <Btn $w={45} $h={33} />
            <ActionLabel $dy={5}>Buying Level</ActionLabel>
          </ActionRow>
        </ActionCol>
        <Btn $w={77} $h={30}>TPMS</Btn>
      </Row>
    </RightPane>
  )
}

function FormFooter() {
  return (
    <Footer>
      <Btn $w={166} $h={35} $ml={4} $gap={3} $pr={26}><BankGlyph /><span><u>H</u>istory</span></Btn>
      <Btn $w={69} $h={35} $ml={1}>Info</Btn>
      <Btn $w={169} $h={35} $ml={321}><span><u>V</u>ehicle Profile</span></Btn>
      <Btn $w={195} $h={35} $ml={3}><span>Customer P<u>r</u>ofile</span></Btn>
      <CarfaxBox>
        <CarfaxMy>my</CarfaxMy>
        <CarfaxStack>
          <CarfaxLetters>
            {['C', 'A', 'R', 'F', 'A'].map((c, i) => <CarfaxLetter key={i}>{c}</CarfaxLetter>)}
            <CarfaxLetter $light>x</CarfaxLetter>
          </CarfaxLetters>
          <CarfaxService>Service History</CarfaxService>
        </CarfaxStack>
      </CarfaxBox>
      <Btn $w={164} $h={35} $ml={124} $gap={10} $pr={20}><Chevrons /><span><u>B</u>ack</span></Btn>
      <Btn $w={165} $h={35} $gap={10} $pl={20}><span><u>N</u>ext</span><Chevrons flip /></Btn>
    </Footer>
  )
}

export default function App() {
  return (
    <Screen>
      <Global />
      <Desktop>
        <TopBar>
          <AppCar />
          <TopButtons>
            <TopButton $w={24}><Minus size={11} strokeWidth={3} color="#111" /></TopButton>
            <TopButton $w={11} />
          </TopButtons>
        </TopBar>
        <ToolBar />
        <Workspace>
          <Window>
            <TitleBar>
              Customer/Auto
              <Redact $x={759} $y={1} $w={105} $h={16} />
            </TitleBar>
            <Head>
              <LogoStack>
                <CustomerLogo>Customer</CustomerLogo>
                <AccountNo>1600903302</AccountNo>
              </LogoStack>
              <Tile $bg="#d6d2b4"><PeopleTile /></Tile>
              <OrderInfo>
                <OrderLine>Workorder #27081</OrderLine>
                <OrderLine $ml={39}>01 REGULAR</OrderLine>
              </OrderInfo>
              <AutoLogo>Auto</AutoLogo>
              <Tile $bg="#d2cebc"><CarsTile /></Tile>
            </Head>
            <Main>
              <CustomerForm />
              <Divider />
              <AutoForm />
            </Main>
            <FormFooter />
          </Window>
        </Workspace>
        <Taskbar>
          <TaskSlot $w={48} $pt={6}><WinLogo /></TaskSlot>
          <TaskSlot $w={47}><ServerGlyph /></TaskSlot>
          <TaskSlot $w={53}><ShellGlyph /></TaskSlot>
          <TaskSlot $w={49}><FilesGlyph /></TaskSlot>
          <TaskSlot $w={52} $line><ChromeMark /></TaskSlot>
          <TaskSlot $w={52} $active $line $pt={5}><LiftCar /></TaskSlot>
          <TaskSlot $w={45} $line><AppWindow /></TaskSlot>
          <Tray>
            <svg width="12" height="12" viewBox="0 0 12 12"><rect x=".5" y=".5" width="11" height="8" fill="#cfe8f4" stroke="#345" /></svg>
            <svg width="12" height="12" viewBox="0 0 12 12"><path d="M1 4h3l3-3v10L4 8H1z" fill="#eee" stroke="#555" strokeWidth=".5" /><circle cx="9" cy="8" r="3" fill="#d33" /></svg>
            <TrayCount>1</TrayCount>
          </Tray>
        </Taskbar>
      </Desktop>
      <Sidebar>
        <Timer>00:53:18</Timer>
        <SideSlot $h={34}><SideSearch size={18} strokeWidth={2} /></SideSlot>
        <SideSlot $h={34}><Circle size={16} strokeWidth={3} /></SideSlot>
        <SideSlot $h={34}><TaskViewGlyph /></SideSlot>
        <SideSlot $h={39}><ButterflyTile /></SideSlot>
        <SideSlot $h={39} $running><FolderGlyph /></SideSlot>
        <SideSlot $h={39} $running><ChromeMark size={19} /></SideSlot>
        <SideSlot $h={39} $running><QbGlyph /></SideSlot>
        <SideSlot $h={39} $running><OfficeGlyph tone="#1f8f4e" letter="x" /></SideSlot>
        <SideSlot $h={39} $active $running><RemoteGlyph /></SideSlot>
        <SideSlot $h={39} $running><OfficeGlyph tone="#2b6cc4" letter="W" /></SideSlot>
        <SideSlot $h={39} $running><ZoomGlyph /></SideSlot>
        <SideBottom>
          <PenGlyph />
          <span>11:19 AM</span>
        </SideBottom>
      </Sidebar>
      <ConnBar>
        <ConnGhost $x={100}>AM Software VAS1 Version</ConnGhost>
        <ConnGhost $x={330}>DB Version 90.1761.1019</ConnGhost>
        <ConnIcons $x={41} $gap={13}>
          <svg width="12" height="8" viewBox="0 0 12 8"><path d="M0 0h12L6 7z" fill="#fff" /></svg>
          <svg width="13" height="11" viewBox="0 0 13 11"><path d="M1 1v9M10.500 0v11M1 5.500h9" stroke="#fff" strokeWidth="2.200" /></svg>
          <svg width="14" height="16" viewBox="0 0 14 16" fill="#fff"><rect x="0" y="11" width="2.500" height="5" /><rect x="4" y="8" width="2.500" height="8" /><rect x="8" y="4" width="2.500" height="12" /><rect x="12" y="0" width="2" height="16" opacity=".55" /></svg>
        </ConnIcons>
        <ConnIp>10.1.10.56</ConnIp>
        <ConnIcons $x={490} $gap={12}>
          <svg width="10" height="12" viewBox="0 0 10 12"><rect x="0" y="9" width="10" height="2.500" fill="#fff" /></svg>
          <svg width="12" height="14" viewBox="0 0 12 14" fill="none" stroke="#fff" strokeWidth="1.500"><rect x=".7" y="5" width="7" height="8" /><path d="M4 5V1h7v7H8" /></svg>
          <X size={14} strokeWidth={4} color="#fff" />
        </ConnIcons>
      </ConnBar>
      <Redact $x={1340} $y={18} $w={210} $h={48} />
      <Cursor width="14" height="20" viewBox="0 0 14 20">
        <path d="M1 1v14l3-3 3 6 2-1-3-6h4z" fill="#fff" stroke="#222" strokeWidth="1" />
      </Cursor>
    </Screen>
  )
}
